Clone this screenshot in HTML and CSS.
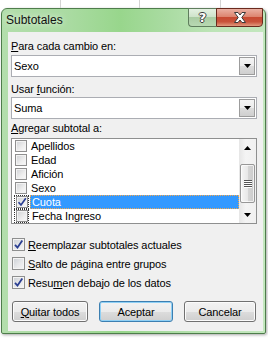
FILE: index.html
```html
<!DOCTYPE html>
<html lang="es">
<head>
    <meta charset="UTF-8">
    <title>Subtotales</title>
    <link rel="stylesheet" href="styles.css">
</head>
<body>
    <!-- fila de la hoja detrás del diálogo -->
    <div class="sheet-row">
        <div class="cell c1"></div>
        <div class="cell c2"></div>
        <div class="cell c3"></div>
        <div class="cell c4"></div>
    </div>

    <div class="window">
        <div class="titlebar">
            <span class="title">Subtotales</span>
            <div class="caption-buttons">
                <div class="cap-btn help">?</div>
                <div class="cap-btn close">
                    <svg width="14" height="11" viewBox="0 0 14 11">
                        <path d="M1.5 0.5 H5 L7 3 L9 0.5 H12.5 L8.8 5.5 L12.5 10.5 H9 L7 8 L5 10.5 H1.5 L5.2 5.5 Z" fill="#fff" stroke="#3a3a3a" stroke-width="1"/>
                    </svg>
                </div>
            </div>
        </div>

        <div class="client">
            <div class="label"><u>P</u>ara cada cambio en:</div>
            <div class="combo">
                <span class="combo-text">Sexo</span>
                <span class="drop-btn">
                    <svg width="7" height="4" viewBox="0 0 7 4"><polygon points="0,0 7,0 3.5,4" fill="#000"/></svg>
                </span>
            </div>

            <div class="label label-2">Usar <u>f</u>unción:</div>
            <div class="combo combo-2">
                <span class="combo-text">Suma</span>
                <span class="drop-btn">
                    <svg width="7" height="4" viewBox="0 0 7 4"><polygon points="0,0 7,0 3.5,4" fill="#000"/></svg>
                </span>
            </div>

            <div class="label label-3"><u>A</u>gregar subtotal a:</div>
            <div class="listbox">
                <div class="list-items">
                    <div class="list-item"><span class="box"></span><span class="item-text">Apellidos</span></div>
                    <div class="list-item"><span class="box"></span><span class="item-text">Edad</span></div>
                    <div class="list-item"><span class="box"></span><span class="item-text">Afición</span></div>
                    <div class="list-item"><span class="box"></span><span class="item-text">Sexo</span></div>
                    <div class="list-item selected">
                        <span class="box-wrap focus"><span class="box">
                            <svg width="10" height="10" viewBox="0 0 10 10"><path d="M1.5 5.2 L4 8 L8.8 1.2" fill="none" stroke="#2b3f92" stroke-width="1.7"/></svg>
                        </span></span>
                        <span class="item-text">Cuota</span>
                    </div>
                    <div class="list-item"><span class="box-wrap focus"><span class="box"></span></span><span class="item-text">Fecha Ingreso</span></div>
                </div>
                <div class="scrollbar">
                    <div class="sb-btn">
                        <svg width="7" height="4" viewBox="0 0 7 4"><polygon points="0,4 7,4 3.5,0" fill="#000"/></svg>
                    </div>
                    <div class="sb-thumb">
                        <svg width="8" height="8" viewBox="0 0 8 8">
                            <path d="M0 0.5 H8 M0 2.5 H8 M0 4.5 H8 M0 6.5 H8" stroke="#555" stroke-width="1"/>
                            <path d="M0 1.5 H8 M0 3.5 H8 M0 5.5 H8 M0 7.5 H8" stroke="#fff" stroke-width="1"/>
                        </svg>
                    </div>
                    <div class="sb-btn">
                        <svg width="7" height="4" viewBox="0 0 7 4"><polygon points="0,0 7,0 3.5,4" fill="#000"/></svg>
                    </div>
                </div>
            </div>

            <div class="options">
                <div class="option">
                    <span class="check checked">
                        <svg width="11" height="11" viewBox="0 0 11 11"><path d="M2 5.8 L4.5 8.6 L9.3 1.6" fill="none" stroke="#2b3f92" stroke-width="1.8"/></svg>
                    </span>
                    <span><u>R</u>eemplazar subtotales actuales</span>
                </div>
                <div class="option">
                    <span class="check"></span>
                    <span><u>S</u>alto de página entre grupos</span>
                </div>
                <div class="option">
                    <span class="check checked">
                        <svg width="11" height="11" viewBox="0 0 11 11"><path d="M2 5.8 L4.5 8.6 L9.3 1.6" fill="none" stroke="#2b3f92" stroke-width="1.8"/></svg>
                    </span>
                    <span>Resu<u>m</u>en debajo de los datos</span>
                </div>
            </div>

            <div class="buttons">
                <button class="btn btn-quitar"><u>Q</u>uitar todos</button>
                <button class="btn btn-aceptar default">Aceptar</button>
                <button class="btn btn-cancelar">Cancelar</button>
            </div>
        </div>
    </div>
</body>
</html>
```

FILE: styles.css
```css
* {
    box-sizing: border-box;
}
html, body {
    margin: 0;
    padding: 0;
}
body {
    width: 268px;
    height: 338px;
    overflow: hidden;
    background: #fff;
    font-family: "Liberation Sans", Arial, sans-serif;
    font-size: 11px;
    letter-spacing: -0.1px;
    color: #000;
}

/* hoja de cálculo detrás */
.sheet-row {
    display: flex;
    height: 8px;
}
.cell {
    height: 8px;
    border-right: 1px solid #d4d4d4;
}
.c1 { width: 61px; }
.c2 { width: 79px; }
.c3 { width: 81px; }
.c4 { width: 47px; border-right: none; }

/* ventana */
.window {
    margin-left: 1px;
    width: 265px;
    height: 326px;
    border: 1px solid #4e7d4b;
    border-radius: 6px 6px 2px 2px;
    background: linear-gradient(to right, #b3deac 0%, #aadba2 25%, #98d68c 45%, #a9dba1 62%, #bde4b7 80%, #c3e7be 100%);
    box-shadow: 1px 1px 3px rgba(0,0,0,0.35);
    display: flex;
    flex-direction: column;
}
.titlebar {
    height: 23px;
    display: flex;
    align-items: flex-start;
    padding: 0 2px 0 4px;
}
.title {
    margin-top: 4px;
    font-size: 12px;
    line-height: 15px;
    letter-spacing: 0;
    color: #111;
    text-shadow: 0 0 6px rgba(255,255,255,0.9);
}
.caption-buttons {
    margin-left: auto;
    margin-top: -1px;
    display: flex;
}
.cap-btn {
    height: 19px;
    display: flex;
    align-items: center;
    justify-content: center;
}
.help {
    width: 28px;
    border: 1px solid #5f7d5d;
    border-right: none;
    border-radius: 0 0 0 4px;
    background: linear-gradient(#e4f1e2 0%, #cfe4cb 45%, #aacca4 50%, #b8d9b2 100%);
    color: #fff;
    font-family: "DejaVu Sans", sans-serif;
    font-weight: bold;
    font-size: 13px;
    text-shadow: -1px 0 #3b3b3b, 1px 0 #3b3b3b, 0 -1px #3b3b3b, 0 1px #3b3b3b;
}
.close {
    width: 47px;
    border: 1px solid #6a2a1e;
    border-radius: 0 0 4px 0;
    background: linear-gradient(#eab0a2 0%, #dd8570 45%, #c74a32 50%, #c8523a 75%, #e29a7e 100%);
}

/* área de cliente */
.client {
    margin: 0 2px 2px 6px;
    height: 299px;
    background: #f0f0f0;
    padding: 7px 6px 0 3px;
    display: flex;
    flex-direction: column;
}
.label {
    height: 14px;
    line-height: 14px;
}
u {
    text-underline-offset: 1px;
}
.label-2 { margin-top: 5px; }
.label-3 { margin-top: 2px; }

.combo {
    margin-top: 2px;
    height: 22px;
    border: 1px solid #abadb3;
    background: #fff;
    display: flex;
    align-items: center;
}
.combo-2 { margin-top: 1px; }
.combo-text {
    padding-left: 2px;
    flex: 1;
}
.drop-btn {
    width: 16px;
    height: 18px;
    margin-right: 1px;
    border: 1px solid #9c9c9c;
    background: linear-gradient(#f4f4f4 0%, #ececec 50%, #dcdcdc 51%, #cfcfcf 100%);
    display: flex;
    align-items: center;
    justify-content: center;
}

/* lista */
.listbox {
    margin-top: 3px;
    height: 86px;
    border: 1px solid #8e8f8f;
    background: #fff;
    display: flex;
}
.list-items {
    flex: 1;
    overflow: hidden;
}
.list-item {
    height: 14px;
    display: flex;
    align-items: center;
    padding-left: 2px;
}
.box-wrap {
    width: 15px;
    height: 14px;
    display: flex;
    align-items: center;
    justify-content: center;
}
.list-item > .box {
    margin: 0 1px 0 1px;
}
.box {
    width: 12px;
    height: 12px;
    border: 1px solid #8f8f8f;
    background: linear-gradient(135deg, #cfd1d4 0%, #eeeeee 60%, #fafafa 100%);
    box-shadow: inset 0 0 0 1px #f3f3f3;
    display: flex;
    align-items: center;
    justify-content: center;
}
.focus {
    outline: 1px dotted #333;
    outline-offset: -1px;
}
.item-text {
    margin-left: 1px;
    padding-left: 2px;
    height: 14px;
    line-height: 14px;
    flex: 1;
}
.selected .item-text {
    background: #3399ff;
    color: #fff;
    border: 1px dotted #f5a84c;
    line-height: 12px;
    padding-left: 1px;
}

.scrollbar {
    width: 17px;
    display: flex;
    flex-direction: column;
    background: linear-gradient(to right, #e6e6e6 0%, #f4f4f4 40%, #f0f0f0 100%);
}
.sb-btn {
    height: 17px;
    display: flex;
    align-items: center;
    justify-content: center;
}
.sb-btn:last-child {
    margin-top: auto;
}
.sb-thumb {
    margin: 8px 1px 0 1px;
    height: 39px;
    border: 1px solid #979797;
    border-radius: 2px;
    background: linear-gradient(to right, #f5f5f5 0%, #e8e8e8 50%, #d6d6d6 51%, #cbcbcb 100%);
    box-shadow: inset 0 0 0 1px rgba(255,255,255,0.7);
    display: flex;
    align-items: center;
    justify-content: center;
}

/* opciones */
.options {
    margin-top: 11px;
}
.option {
    height: 19px;
    display: flex;
    align-items: center;
}
.check {
    width: 13px;
    height: 13px;
    margin: 0 3px 0 1px;
    border: 1px solid #8e8f8f;
    background: linear-gradient(135deg, #cbcfd5 0%, #e7e8ea 55%, #f6f6f6 100%);
    box-shadow: inset 0 0 0 1px #f4f4f4;
    display: flex;
    align-items: center;
    justify-content: center;
}

/* botones */
.buttons {
    margin-top: 9px;
    display: flex;
    gap: 11px;
    padding-left: 1px;
}
.btn {
    height: 21px;
    padding: 0;
    border: 1px solid #707070;
    border-radius: 3px;
    background: linear-gradient(#f2f2f2 0%, #ebebeb 50%, #dddddd 51%, #cfcfcf 100%);
    box-shadow: inset 0 0 0 1px #fbfbfb;
    font-family: "Liberation Sans", Arial, sans-serif;
    font-size: 11px;
    letter-spacing: -0.1px;
    color: #000;
}
.btn-quitar { width: 76px; }
.btn-aceptar { width: 74px; }
.btn-cancelar { width: 72px; }
.default {
    border-color: #3c7fb1;
    box-shadow: inset 0 0 0 1px #8fd0f5;
}
```
